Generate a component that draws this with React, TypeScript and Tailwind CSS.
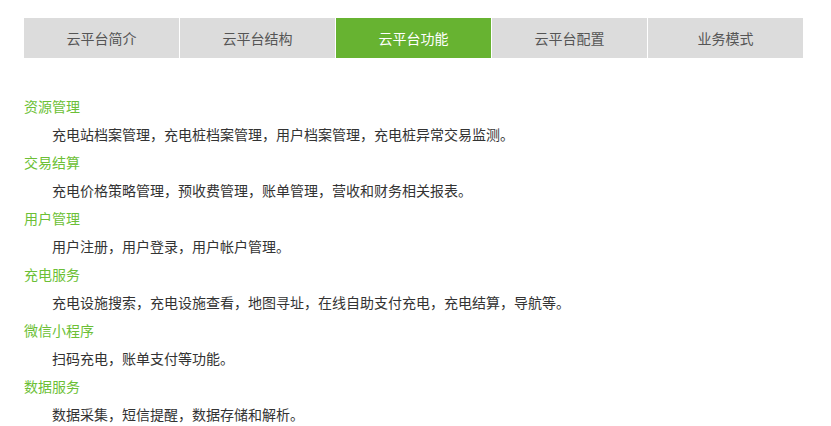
import React from "react";

const tabs = ["云平台简介", "云平台结构", "云平台功能", "云平台配置", "业务模式"];
const items: [string, string][] = [
  ["资源管理", "充电站档案管理，充电桩档案管理，用户档案管理，充电桩异常交易监测。"],
  ["交易结算", "充电价格策略管理，预收费管理，账单管理，营收和财务相关报表。"],
  ["用户管理", "用户注册，用户登录，用户帐户管理。"],
  ["充电服务", "充电设施搜索，充电设施查看，地图寻址，在线自助支付充电，充电结算，导航等。"],
  ["微信小程序", "扫码充电，账单支付等功能。"],
  ["数据服务", "数据采集，短信提醒，数据存储和解析。"],
];

export default function App() {
  return (
    <div
      className="w-[831px] h-[426px] overflow-hidden bg-white pt-[18px] pl-[24px]"
      style={{ fontFamily: '"Microsoft YaHei", "Noto Sans CJK SC", sans-serif' }}
    >
      <div className="flex w-[780px]">
        {tabs.map((t, i) => (
          <div
            key={t}
            className={
              i === 2
                ? "w-[156px] h-[40px] flex items-center justify-center text-[14px] text-white bg-[#67b331] border-r border-white"
                : "w-[156px] h-[40px] flex items-center justify-center text-[14px] text-[#555555] bg-[#dcdcdc] border-r border-white"
            }
          >
            {t}
          </div>
        ))}
      </div>
      <div className="mt-[34px] text-[14px] leading-[28px]">
        {items.map(([h, b]) => (
          <div key={h}>
            <div className="text-[#6cbf36]">{h}</div>
            <div className="pl-[28px] text-[#333333]">{b}</div>
          </div>
        ))}
      </div>
    </div>
  );
}
